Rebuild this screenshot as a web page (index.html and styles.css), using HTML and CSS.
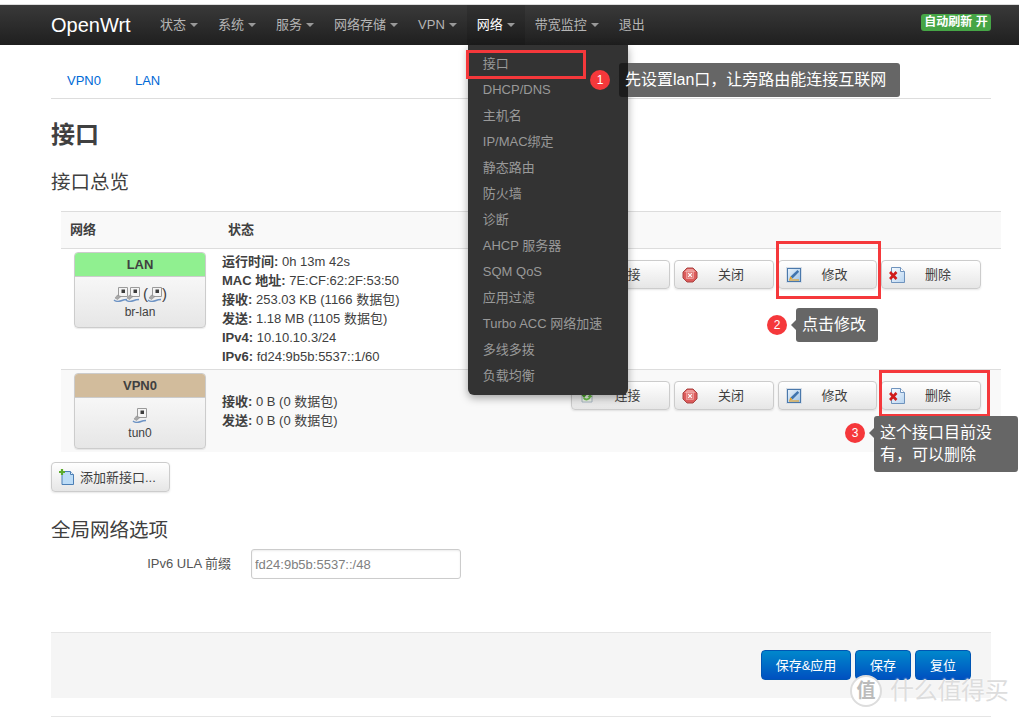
FILE: index.html
```html
<!DOCTYPE html>
<html lang="zh-CN">
<head>
<meta charset="utf-8">
<title>OpenWrt 接口</title>
<link rel="stylesheet" href="styles.css">
</head>
<body>
<svg class="defs" width="0" height="0" aria-hidden="true">
  <defs>
    <linearGradient id="g-edit" x1="0" y1="0" x2="1" y2="1"><stop offset="0" stop-color="#eaf3fb"/><stop offset="1" stop-color="#9cc2e6"/></linearGradient>
    <linearGradient id="g-page" x1="0" y1="0" x2="1" y2="1"><stop offset="0" stop-color="#f7fbff"/><stop offset="1" stop-color="#b7d4f0"/></linearGradient>
  </defs>
  <symbol id="i-port" viewBox="0 0 16 16">
    <path d="M5.500 1.500h9v9h-9z" fill="#f4f4f4" stroke="#9a9a9a"/>
    <rect x="8.500" y="3.500" width="3.500" height="3.500" fill="#3c3c3c"/>
    <path d="M8 10.500l-3.500-1.500-2.500 3 2.500 1.500z" fill="#a8a8a8" stroke="#888" stroke-width=".5"/>
    <path d="M1 14c2 2 6 1.500 8 .5s3-1 5-1" fill="none" stroke="#6d93c4" stroke-width="1.400"/>
  </symbol>
  <symbol id="i-connect" viewBox="0 0 16 16">
    <path d="M3 2h10v12H3z" fill="#eef6ea" stroke="#9ab" stroke-width=".8"/>
    <path d="M12 5.500A4.500 4.500 0 0 0 4 7l-1.500 0 2.500 3 2.500-3H6a2.700 2.700 0 0 1 4.500-.5z" fill="#4aa02c"/>
    <path d="M4 10.500A4.500 4.500 0 0 0 12 9l1.500 0-2.500-3-2.500 3H10a2.700 2.700 0 0 1-4.500.5z" fill="#6cc24a"/>
  </symbol>
  <symbol id="i-close" viewBox="0 0 16 16">
    <path d="M5 1h6l4 4v6l-4 4H5l-4-4V5z" fill="#dc5b5b" stroke="#a94442"/>
    <path d="M5.200 2h5.600l3 3H2.200z" fill="#ee9a98"/>
    <rect x="4.500" y="4.500" width="7" height="7" fill="#e47c7a" stroke="#f0b4b2" stroke-width=".6"/>
    <path d="M6.200 6.200l3.600 3.600 M9.800 6.200l-3.600 3.600" stroke="#fff" stroke-width="1.100"/>
  </symbol>
  <symbol id="i-edit" viewBox="0 0 16 16">
    <rect x=".5" y=".5" width="15" height="15" fill="#fff" stroke="#d5dde6"/>
    <rect x="1.500" y="1.500" width="13" height="13" fill="url(#g-edit)" stroke="#4a78ab"/>
    <path d="M4.500 9.500L11.500 3l1.700 1.700L6.500 11.500z" fill="#3f74ae"/>
    <path d="M3.300 12.500l1-3.200 2.200 2.200z" fill="#e8a020"/>
    <path d="M3 13h10" stroke="#e8a020" stroke-width="1.100"/>
  </symbol>
  <symbol id="i-delete" viewBox="0 0 16 16">
    <path d="M2.500.5h9l4 4v11h-13z" fill="url(#g-page)" stroke="#6f93bd"/>
    <path d="M11.500.5v4h4" fill="#fff" stroke="#6f93bd"/>
    <path d="M1 5l6.500 7 M7.500 5L1 12" stroke="#d01c1c" stroke-width="2.600"/>
  </symbol>
  <symbol id="i-add" viewBox="0 0 16 16">
    <path d="M3 2.500h8.500l3 3v10H3z" fill="#bcdcf7" stroke="#4c7fb5"/>
    <path d="M11.500 2.500v3h3" fill="#eaf4fd" stroke="#4c7fb5"/>
    <path d="M3 0v6 M0 3h6" stroke="#5cab2c" stroke-width="2.200"/>
  </symbol>
</svg>

<header class="navbar">
  <a class="brand">OpenWrt</a>
  <ul class="menu">
    <li class="menu-item"><span>状态</span><i class="caret"></i></li>
    <li class="menu-item"><span>系统</span><i class="caret"></i></li>
    <li class="menu-item"><span>服务</span><i class="caret"></i></li>
    <li class="menu-item"><span>网络存储</span><i class="caret"></i></li>
    <li class="menu-item"><span>VPN</span><i class="caret"></i></li>
    <li class="menu-item is-open"><span>网络</span><i class="caret"></i>
      <ul class="dropdown">
        <li>接口</li>
        <li>DHCP/DNS</li>
        <li>主机名</li>
        <li>IP/MAC绑定</li>
        <li>静态路由</li>
        <li>防火墙</li>
        <li>诊断</li>
        <li>AHCP 服务器</li>
        <li>SQM QoS</li>
        <li>应用过滤</li>
        <li>Turbo ACC 网络加速</li>
        <li>多线多拨</li>
        <li>负载均衡</li>
      </ul>
    </li>
    <li class="menu-item"><span>带宽监控</span><i class="caret"></i></li>
    <li class="menu-item"><span>退出</span></li>
  </ul>
  <span class="refresh">自动刷新 开</span>
</header>

<main class="page">
  <nav class="tabs"><a>VPN0</a><a>LAN</a></nav>
  <h1 class="title">接口</h1>
  <h2 class="subtitle">接口总览</h2>

  <section class="table">
    <div class="row head"><span class="th-net">网络</span><span class="th-status">状态</span></div>

    <div class="row row-lan">
      <div class="card">
        <div class="card-head head-lan">LAN</div>
        <div class="card-body">
          <div class="card-icons">
            <svg class="ic"><use href="#i-port"/></svg><svg class="ic ic-tight"><use href="#i-port"/></svg>
            <b class="paren">(</b><svg class="ic ic-paren"><use href="#i-port"/></svg><b class="paren">)</b>
          </div>
          <div>br-lan</div>
        </div>
      </div>
      <div class="status">
        <div><b>运行时间:</b> 0h 13m 42s</div>
        <div><b>MAC 地址:</b> 7E:CF:62:2F:53:50</div>
        <div><b>接收:</b> 253.03 KB (1166 数据包)</div>
        <div><b>发送:</b> 1.18 MB (1105 数据包)</div>
        <div><b>IPv4:</b> 10.10.10.3/24</div>
        <div><b>IPv6:</b> fd24:9b5b:5537::1/60</div>
      </div>
      <div class="actions">
        <button class="btn"><svg class="ic"><use href="#i-connect"/></svg><span>连接</span></button>
        <button class="btn"><svg class="ic"><use href="#i-close"/></svg><span>关闭</span></button>
        <button class="btn"><svg class="ic"><use href="#i-edit"/></svg><span>修改</span></button>
        <button class="btn"><svg class="ic"><use href="#i-delete"/></svg><span>删除</span></button>
      </div>
    </div>

    <div class="row row-vpn">
      <div class="card">
        <div class="card-head head-vpn">VPN0</div>
        <div class="card-body">
          <div class="card-icons"><svg class="ic"><use href="#i-port"/></svg></div>
          <div>tun0</div>
        </div>
      </div>
      <div class="status">
        <div><b>接收:</b> 0 B (0 数据包)</div>
        <div><b>发送:</b> 0 B (0 数据包)</div>
      </div>
      <div class="actions">
        <button class="btn"><svg class="ic"><use href="#i-connect"/></svg><span>连接</span></button>
        <button class="btn"><svg class="ic"><use href="#i-close"/></svg><span>关闭</span></button>
        <button class="btn"><svg class="ic"><use href="#i-edit"/></svg><span>修改</span></button>
        <button class="btn"><svg class="ic"><use href="#i-delete"/></svg><span>删除</span></button>
      </div>
    </div>
  </section>

  <button class="btn btn-add"><svg class="ic"><use href="#i-add"/></svg><span>添加新接口...</span></button>

  <h2 class="subtitle global">全局网络选项</h2>
  <div class="field">
    <label class="field-label">IPv6 ULA 前缀</label>
    <input class="field-input" value="fd24:9b5b:5537::/48">
  </div>

  <div class="form-actions">
    <button class="btn-primary">保存&amp;应用</button>
    <button class="btn-primary short">保存</button>
    <button class="btn-primary short">复位</button>
  </div>
  <div class="footer-line"></div>
</main>

<div class="redbox box-1"></div>
<div class="redbox box-2"></div>
<div class="redbox box-3"></div>

<span class="num num-1">1</span>
<div class="tip tip-1">先设置lan口，让旁路由能连接互联网</div>
<span class="num num-2">2</span>
<div class="tip tip-2">点击修改</div>
<span class="num num-3">3</span>
<div class="tip tip-3">这个接口目前没有，可以删除</div>

<div class="watermark"><span class="wm-logo">值</span><span class="wm-text">什么值得买</span></div>
</body>
</html>
```

FILE: styles.css
```css
* { box-sizing: border-box; }
html, body { margin: 0; padding: 0; }
body {
  position: relative;
  height: 718px;
  overflow: hidden;
  background: #fff;
  color: #404040;
  font: 13px/19px "Liberation Sans", "Noto Sans CJK SC", sans-serif;
}
.defs { position: absolute; }
ul { list-style: none; margin: 0; padding: 0; }

/* navbar */
.navbar {
  display: flex;
  align-items: center;
  height: 45px;
  margin: 0;
  padding: 0 28px 0 51px;
  border-top: 4px solid #fff;
  box-shadow: inset 0 1px 0 #ddd;
  background: linear-gradient(#3a3a3a, #1f1f1f);
}
.brand { width: 99px; color: #fff; font-size: 20px; line-height: 40px; }
.menu { display: flex; height: 41px; }
.menu-item {
  position: relative;
  display: flex;
  align-items: center;
  gap: 4px;
  padding: 0 10px;
  color: #b5b5b5;
  font-size: 13px;
}
.caret {
  width: 0; height: 0;
  border: 4px solid transparent;
  border-top-color: #999;
  border-bottom-width: 0;
}
.is-open { margin-top: 1px; padding-bottom: 1px; background: rgba(0, 0, 0, .12); color: #fff; }
.dropdown {
  position: absolute;
  top: 40px;
  left: 1px;
  z-index: 2;
  width: 160px;
  padding: 6px 0 6px;
  background: #333;
  border-radius: 0 0 6px 6px;
  box-shadow: 0 3px 8px rgba(0, 0, 0, .35);
  color: #999;
}
.dropdown li { height: 26px; padding-left: 15px; line-height: 25px; white-space: nowrap; }
.refresh {
  margin-left: auto;
  width: 70px;
  height: 17px;
  background: #46a546;
  border-radius: 3px;
  color: #fff;
  font-size: 12px;
  font-weight: 700;
  line-height: 17px;
  text-align: center;
  margin-top: -4px;
}

/* page */
.page { width: 940px; margin-left: 51px; }
.tabs {
  display: flex;
  gap: 34px;
  height: 37px;
  margin-top: 17px;
  padding: 0 16px;
  border-bottom: 1px solid #ddd;
  color: #0069d6;
  font-size: 13px;
  line-height: 37px;
}
.title { margin: 18px 0 0; color: #404040; font-size: 24px; font-weight: 700; line-height: 36px; }
.subtitle { margin: 14px 0 0; color: #404040; font-size: 19.500px; font-weight: 400; line-height: 30px; }

/* table */
.table { width: 940px; margin: 14px 0 0 10px; border-top: 1px solid #ddd; }
.row { display: flex; border-bottom: 1px solid #ddd; }
.head { align-items: center; height: 37px; padding-bottom: 2px; background: #f9f9f9; font-weight: 700; }
.th-net { margin-left: 9px; }
.th-status { margin-left: 132px; }
.row-lan { height: 121px; padding-top: 3px; }
.row-vpn { height: 82px; padding-top: 3px; background: #f9f9f9; border-bottom: 0; }
.card {
  width: 132px;
  margin-left: 13px;
  flex: none;
  overflow: hidden;
  border: 1px solid #ccc;
  border-radius: 4px;
  font-size: 12px;
  text-align: center;
  box-shadow: 0 1px 1px rgba(0, 0, 0, .08);
  background: linear-gradient(#fff, #e6e6e6);
}
.row-lan .card { height: 76px; }
.row-vpn .card { height: 76px; }
.card-head { height: 24px; color: #404040; font-size: 13px; font-weight: 700; line-height: 24px; border-bottom: 1px solid #ccc; }
.head-lan { background: #90f090; }
.head-vpn { background: #d2bc9c; }
.card-body { padding-top: 8px; }
.card-icons { display: flex; justify-content: center; align-items: center; height: 17px; margin-bottom: 1px; }
.ic { width: 16px; height: 16px; flex: none; }
.ic-tight { margin-left: -4px; }
.ic-paren { margin: 0 -1px; }
.paren { font-size: 15px; font-weight: 400; margin-left: 2px; }
.ic-paren + .paren { margin-left: 0; }
.status { margin-left: 16px; white-space: nowrap; }
.row-vpn .status { padding-top: 19px; }
.actions { display: flex; gap: 4px; margin: 8px 20.250px 0 auto; height: 29px; }

.btn {
  position: relative;
  display: flex;
  align-items: center;
  width: 99.500px;
  height: 29px;
  padding: 0 7px;
  border: 1px solid #ccc;
  border-radius: 4px;
  background: linear-gradient(#fff, #e6e6e6);
  box-shadow: 0 1px 2px rgba(0, 0, 0, .1);
  color: #404040;
  font: inherit;
}
.btn span { flex: 1; text-align: center; padding-right: 2px; }
.btn-add { width: 119px; height: 30px; margin-top: 10px; padding-left: 7px; }
.btn-add span { padding: 0; margin-left: 5px; text-align: left; white-space: nowrap; }

/* form */
.global { margin-top: 23px; }
.field { display: flex; align-items: center; margin-top: 4px; }
.field-label { width: 180px; margin-bottom: 2px; text-align: right; color: #555; }
.field-input {
  width: 210px;
  height: 30px;
  margin-left: 20px;
  padding: 0 3px;
  border: 1px solid #ccc;
  border-radius: 3px;
  box-shadow: inset 0 1px 2px rgba(0, 0, 0, .08);
  color: #808080;
  font: inherit;
}
.form-actions {
  display: flex;
  justify-content: flex-end;
  gap: 4px;
  height: 66px;
  margin-top: 53px;
  padding: 17px 20px 0 0;
  background: #f5f5f5;
  border-top: 1px solid #e5e5e5;
}
.btn-primary {
  width: 90px;
  height: 30px;
  border: 1px solid #0055b3;
  border-radius: 4px;
  background: linear-gradient(#0088cc, #0050c0);
  color: #fff;
  font: inherit;
}
.short { width: 56px; }
.footer-line { margin-top: 18px; border-top: 1px solid #e5e5e5; }

/* annotations */
.redbox { position: absolute; z-index: 3; border: 3px solid #f5383b; }
.box-1 { left: 466px; top: 50px; width: 120px; height: 29px; }
.box-2 { left: 776px; top: 241px; width: 105px; height: 58px; }
.box-3 { left: 879px; top: 370px; width: 111px; height: 47px; }

.num {
  position: absolute;
  z-index: 4;
  width: 20px;
  height: 20px;
  background: #f5383b;
  border-radius: 50%;
  color: #fff;
  font-size: 12px;
  line-height: 20px;
  text-align: center;
}
.num-1 { left: 590px; top: 70px; }
.num-2 { left: 767px; top: 315px; }
.num-3 { left: 845px; top: 423px; }

.tip {
  position: absolute;
  z-index: 4;
  padding: 0 6px;
  background: #666;
  border-radius: 3px;
  color: #fff;
  font-size: 16px;
}
.tip::before {
  content: "";
  position: absolute;
  left: -5px;
  border: 5px solid transparent;
  border-left-width: 0;
  border-right-color: #333;
}
.tip-1 {
  left: 619px; top: 63px; width: 281px; height: 34px;
  background: linear-gradient(90deg, #1c1c1c 9px, #666 9px);
  line-height: 34px;
  white-space: nowrap;
}
.tip-1::before { top: 12px; }
.tip-2 { left: 796px; top: 308px; width: 82px; height: 34px; line-height: 34px; white-space: nowrap; }
.tip-2::before { top: 12px; border-right-color: #666; }
.tip-3 { left: 874px; top: 416px; width: 144px; height: 56px; padding: 6px 20px 0 6px; line-height: 22px; }
.tip-3::before { top: 12px; border-right-color: #666; }

.watermark { position: absolute; z-index: 5; left: 850px; top: 675px; display: flex; align-items: center; gap: 8px; }
.wm-logo {
  width: 32px; height: 32px;
  background: #fff;
  border: 2px solid #ddd;
  border-radius: 50%;
  color: #bbb;
  font-size: 19px;
  font-weight: 700;
  line-height: 28px;
  text-align: center;
}
.wm-text { color: #ddd; font-size: 24px; line-height: 30px; white-space: nowrap; letter-spacing: -.3px; text-shadow: 0 0 2px #fff; }
```
